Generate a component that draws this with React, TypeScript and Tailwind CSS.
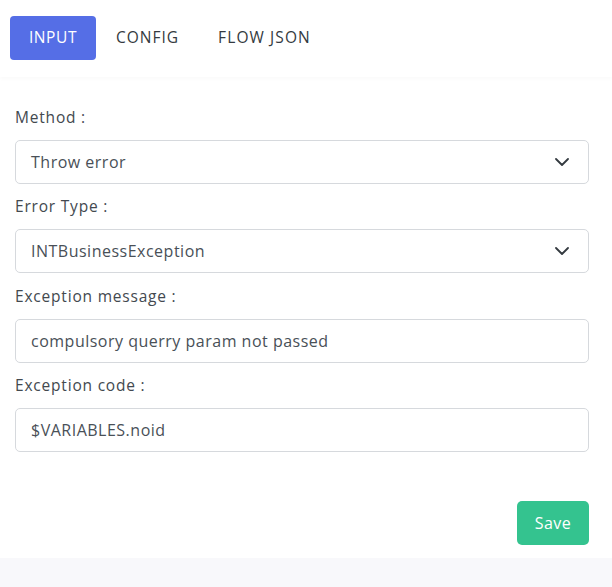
import React from "react";

const font = { fontFamily: '"Open Sans", "Noto Sans", sans-serif' };

function Chevron() {
  return (
    <svg width="14" height="8" viewBox="0 0 14 8" fill="none" className="absolute right-[19px] top-1/2 -translate-y-1/2">
      <path d="M1 1l6 6 6-6" stroke="#343a40" strokeWidth="1.8" strokeLinecap="round" strokeLinejoin="round" />
    </svg>
  );
}

function Field({ label, value, select }: { label: string; value: string; select?: boolean }) {
  return (
    <div className="flex flex-col">
      <div className="h-[22px] leading-[22px] text-[15.5px] font-medium tracking-[0.8px] text-[#43494f] mb-[12px]">{label}</div>
      <div className="relative h-[44px] rounded-[5px] border border-[#d6d9dd] bg-white flex items-center pl-[15px] text-[16px] tracking-[0.5px] text-[#495057]">
        {value}
        {select && <Chevron />}
      </div>
    </div>
  );
}

export default function App() {
  return (
    <div className="w-[612px] h-[587px] bg-[#f8f8fb]" style={font}>
      <div className="bg-white h-[558px] flex flex-col">
        <div className="h-[77px] pt-[16px] pl-[10px] flex items-start shadow-[0_2px_4px_rgba(0,0,0,0.025)]">
          <div className="h-[44px] w-[86px] rounded-[4px] bg-[#556ee6] text-white text-[15.5px] font-medium tracking-[0.6px] flex items-center justify-center">INPUT</div>
          <div className="h-[44px] pl-[20px] pr-[19px] text-[#343a40] text-[15.5px] font-medium tracking-[1px] flex items-center">CONFIG</div>
          <div className="h-[44px] px-[20px] text-[#343a40] text-[15.5px] font-medium tracking-[1.1px] flex items-center">FLOW JSON</div>
        </div>
        <div className="pl-[15px] pr-[23px] pt-[29px] flex flex-col gap-[11.4px]">
          <Field label="Method :" value="Throw error" select />
          <Field label="Error Type :" value="INTBusinessException" select />
          <Field label="Exception message :" value="compulsory querry param not passed" />
          <Field label="Exception code :" value="$VARIABLES.noid" />
          <div className="flex justify-end mt-[37px]">
            <div className="h-[44px] w-[72px] rounded-[5px] bg-[#34c38f] text-white text-[16px] font-medium tracking-[0.5px] flex items-center justify-center">Save</div>
          </div>
        </div>
      </div>
    </div>
  );
}
